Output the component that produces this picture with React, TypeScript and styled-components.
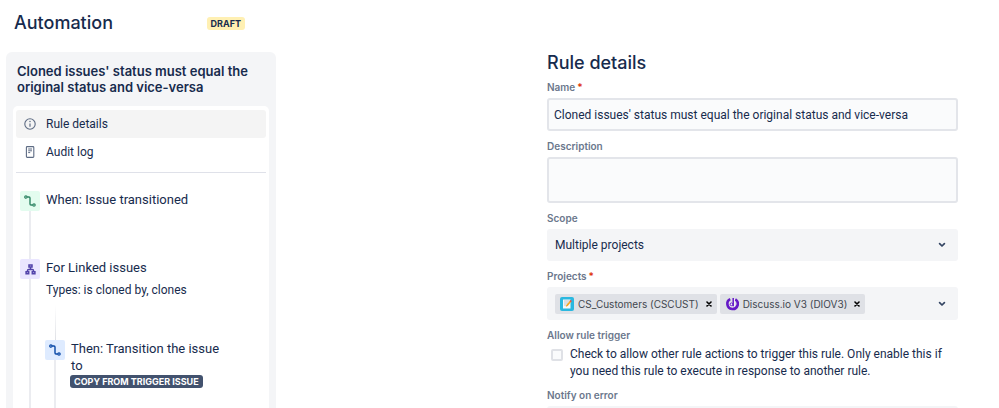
import React from "react";
import styled, { createGlobalStyle } from "styled-components";

const GlobalStyle = createGlobalStyle`
  *, *::before, *::after { box-sizing: border-box; }
  body {
    margin: 0;
    background: #ffffff;
    color: #172b4d;
    font-family: Roboto, "Liberation Sans", sans-serif;
    font-size: 12px;
    line-height: 16px;
  }
  button, input, textarea, select { font: inherit; color: inherit; }
`;

const displayFont = `Inter, "Liberation Sans", sans-serif`;

const Page = styled.div`
  display: flex;
  height: 100vh;
  overflow: hidden;
`;

const SideColumn = styled.div`
  display: flex;
  flex-direction: column;
  flex: 0 0 270px;
  margin-left: 6px;
`;

const TopBar = styled.header`
  display: flex;
  align-items: center;
  justify-content: space-between;
  flex: none;
  height: 52px;
  padding: 0 31px 6px 8px;
`;

const Heading = styled.h1`
  margin: 0;
  font-family: ${displayFont};
  font-size: 18px;
  line-height: 24px;
  font-weight: 500;
`;

const SectionHeading = styled(Heading).attrs({ as: "h2" })``;

const Lozenge = styled.span<{ $tone: "draft" | "bold" }>`
  display: inline-block;
  padding: 0 4px;
  border-radius: 3px;
  font-family: ${displayFont};
  font-size: 9px;
  line-height: 13px;
  font-weight: 700;
  text-transform: uppercase;
  white-space: nowrap;
  background: ${(p) => (p.$tone === "draft" ? "#fff0b3" : "#42526e")};
  color: ${(p) => (p.$tone === "draft" ? "#172b4d" : "#ffffff")};
`;

const Sidebar = styled.aside`
  display: flex;
  flex-direction: column;
  flex: 1;
  padding: 11px 7px 0;
  border-radius: 6px 6px 0 0;
  background: #f4f5f7;
`;

const RuleName = styled.h2`
  margin: 0 0 11px;
  padding: 0 4px;
  font-family: ${displayFont};
  font-size: 13px;
  line-height: 16px;
  font-weight: 600;
`;

const Panel = styled.div`
  flex: 1;
  padding: 4px 3px 0;
  border-radius: 5px 5px 0 0;
  background: #ffffff;
`;

const NavLink = styled.a<{ $active?: boolean }>`
  display: flex;
  align-items: center;
  gap: 10px;
  height: 28px;
  padding: 0 8px;
  border-radius: 3px;
  color: #172b4d;
  text-decoration: none;
  background: ${(p) => (p.$active ? "#f4f4f4" : "transparent")};
`;

const Divider = styled.hr`
  height: 1px;
  margin: 6px 0 18px;
  border: 0;
  background: #dfe1e9;
`;

const Steps = styled.div`
  padding-left: 4px;
`;

const Step = styled.div<{ $height?: number }>`
  display: flex;
  gap: 5px;
  min-height: ${(p) => (p.$height ? `${p.$height}px` : "0")};
`;

const Rail = styled.div`
  display: flex;
  flex-direction: column;
  align-items: center;
  flex: 0 0 20px;
`;

const RailLine = styled.div<{ $fade?: boolean }>`
  width: ${(p) => (p.$fade ? "1px" : "2px")};
  flex: ${(p) => (p.$fade ? "0 0 35px" : "1")};
  background: ${(p) => (p.$fade ? "linear-gradient(#ffffff, #dfe1e6)" : "#ebecf0")};
`;

const StepIcon = styled.span<{ $color: string; $background: string }>`
  display: grid;
  place-items: center;
  width: 20px;
  height: 20px;
  border-radius: 2px;
  color: ${(p) => p.$color};
  background: ${(p) => p.$background};
`;

const StepBody = styled.div`
  flex: 1;
`;

const StepTitle = styled.h3`
  margin: 0;
  padding-left: 1px;
  font-size: 13px;
  line-height: 17px;
  font-weight: 400;
`;

const StepNote = styled.p`
  margin: 6px 0 7px;
  padding-left: 1px;
`;

const BranchText = styled.div`
  display: flex;
  flex-direction: column;
  align-items: flex-start;
  gap: 1px;
  max-width: 160px;
  padding: 35px 0 60px;
`;

const Main = styled.main`
  display: flex;
  flex: 1;
  justify-content: flex-end;
  padding: 51px 41px 0 24px;
`;

const Form = styled.form`
  display: flex;
  flex-direction: column;
  gap: 9px;
  width: 60%;
  min-width: 411px;
`;

const TitleBlock = styled.div`
  margin-bottom: -3px;
`;

const Field = styled.div`
  display: flex;
  flex-direction: column;
  gap: 4px;
`;

const Label = styled.label`
  font-family: ${displayFont};
  font-size: 10px;
  line-height: 13px;
  font-weight: 600;
  color: #6b778c;
`;

const Required = styled.span`
  margin-left: 2px;
  color: #de350b;
`;

const TextInput = styled.input`
  width: 100%;
  height: 33px;
  padding: 0 5px;
  border: 2px solid #e3e5ea;
  border-radius: 3px;
  background: #fafbfc;
`;

const TextArea = styled.textarea`
  display: block;
  width: 100%;
  height: 46px;
  padding: 5px;
  border: 2px solid #e3e5ea;
  border-radius: 3px;
  background: #fafbfc;
  resize: none;
`;

const Picker = styled.div`
  display: grid;
  align-items: center;
  height: 32px;
  border-radius: 3px;
  background: #f4f5f7;
  & > * { grid-area: 1 / 1; }
`;

const Select = styled.select`
  appearance: none;
  width: 100%;
  height: 32px;
  padding: 0 32px 0 8px;
  border: 0;
  background: transparent;
`;

const PickerArrow = styled.span`
  display: grid;
  place-items: center;
  justify-self: end;
  width: 12px;
  margin-right: 10px;
  color: #344563;
  pointer-events: none;
`;

const MultiPicker = styled.div`
  display: flex;
  align-items: center;
  gap: 3px;
  min-height: 33px;
  padding: 0 10px 0 8px;
  border-radius: 3px;
  background: #f4f5f7;
`;

const Tag = styled.span`
  display: flex;
  align-items: center;
  height: 20px;
  padding: 0 2px 0 5px;
  gap: 4px;
  border-radius: 2px;
  background: #dfe1e6;
  color: #42474f;
  font-family: ${displayFont};
  font-size: 10px;
  white-space: nowrap;
`;

const IconButton = styled.button`
  display: grid;
  place-items: center;
  width: 12px;
  height: 16px;
  padding: 0;
  border: 0;
  background: none;
  color: #000000;
`;

const OpenButton = styled(IconButton)`
  margin-left: auto;
  color: #344563;
`;

const CheckRow = styled.label`
  display: flex;
  gap: 7px;
  padding-left: 4px;
  line-height: 17px;
`;

const Checkbox = styled.input`
  appearance: none;
  flex: none;
  width: 12px;
  height: 12px;
  margin: 3px 0 0;
  border: 2px solid #dfe1e6;
  border-radius: 2px;
  background: #fafbfc;
`;

const InfoIcon = () => (
  <svg width="12" height="12" viewBox="0 0 12 12" fill="none" stroke="#5e6c84">
    <circle cx="6" cy="6" r="5.2" strokeWidth="1.1" />
    <path d="M6 5.4v3.4" strokeWidth="1.2" />
    <circle cx="6" cy="3.5" r=".75" fill="#5e6c84" stroke="none" />
  </svg>
);

const LogIcon = () => (
  <svg width="12" height="12" viewBox="0 0 12 12" fill="none" stroke="#5e6c84">
    <rect x="2.4" y=".6" width="7.4" height="10.8" rx=".8" strokeWidth="1.1" />
    <path d="M4.2 3h3.8M4.2 4.8h3.8M4.2 6.6h2" strokeWidth="1" />
  </svg>
);

const TransitionIcon = () => (
  <svg width="12" height="12" viewBox="0 0 12 12" fill="none" stroke="currentColor">
    <circle cx="1.9" cy="2" r="1.2" strokeWidth="1.2" />
    <circle cx="10" cy="10" r="1.2" strokeWidth="1.2" />
    <path d="M3.1 2H5q1 0 1 1v6q0 1 1 1h1.8" strokeWidth="1.4" />
  </svg>
);

const BranchIcon = () => (
  <svg width="11" height="11" viewBox="0 0 11 11" fill="none" stroke="currentColor" strokeWidth="1.5">
    <path d="M4 1.1h3v2H4zM1.1 7.7h2.6v2H1.1zM7.3 7.7h2.6v2H7.3zM5.5 3.3v2.2M2.4 7.7V7q0-1.4 1.4-1.4h3.4q1.4 0 1.4 1.4v.7" />
  </svg>
);

const ChevronIcon = () => (
  <svg width="8" height="6" viewBox="0 0 8 6" fill="none" stroke="currentColor" strokeWidth="1.7" strokeLinecap="round" strokeLinejoin="round">
    <path d="M1.6 1.6 4 4l2.4-2.4" />
  </svg>
);

const CloseIcon = () => (
  <svg width="6" height="6" viewBox="0 0 6 6" stroke="currentColor" strokeWidth="1.6" strokeLinecap="round">
    <path d="m1 1 4 4M5 1 1 5" />
  </svg>
);

const NotesLogo = () => (
  <svg width="14" height="14" viewBox="0 0 14 14">
    <rect width="14" height="14" rx="2" fill="#2bb8e0" />
    <rect x="3" y="2.5" width="7.5" height="9" fill="#f7f8fa" />
    <path d="M4 4h5.4M4 6h4M4 8h2.6" stroke="#aeb8c5" strokeWidth=".8" />
    <path d="m5.8 9.8.5-1.8 3.8-4.6 1.4 1.2-3.8 4.5z" fill="#f5a623" />
    <path d="m9.5 4.1.9-1.1 1.4 1.1-.9 1.2z" fill="#e5484d" />
  </svg>
);

const DiscussLogo = () => (
  <svg width="14" height="14" viewBox="0 0 14 14" fill="none">
    <path d="M10.3 2.4A5.2 5.2 0 0 1 7 12" stroke="#6519c7" strokeWidth="2.6" />
    <path d="M5.2 2.2A5.2 5.2 0 0 0 7 12" stroke="#6519c7" strokeWidth="2.6" />
    <circle cx="6.5" cy="7.3" r="2.4" fill="#f4f5f7" />
    <circle cx="6.5" cy="7.3" r="1.4" stroke="#6519c7" strokeWidth="1" />
    <path d="M8.2 1v8.3" stroke="#6519c7" strokeWidth="1.5" />
    <path d="M9.5 2v7.3" stroke="#f4f5f7" strokeWidth=".8" />
  </svg>
);

const projects = [
  { name: "CS_Customers (CSCUST)", Logo: NotesLogo },
  { name: "Discuss.io V3 (DIOV3)", Logo: DiscussLogo },
];

const ruleName = "Cloned issues' status must equal the original status and vice-versa";

export default function App() {
  return (
    <Page>
      <GlobalStyle />
      <SideColumn>
        <TopBar>
          <Heading>Automation</Heading>
          <Lozenge $tone="draft">Draft</Lozenge>
        </TopBar>
        <Sidebar>
          <RuleName>{ruleName}</RuleName>
          <Panel>
            <nav>
              <NavLink href="#details" $active>
                <InfoIcon />
                Rule details
              </NavLink>
              <NavLink href="#audit">
                <LogIcon />
                Audit log
              </NavLink>
            </nav>
            <Divider />
            <Steps>
              <Step $height={68}>
                <Rail>
                  <StepIcon $color="#2f8565" $background="#e3fcef">
                    <TransitionIcon />
                  </StepIcon>
                  <RailLine />
                </Rail>
                <StepBody>
                  <StepTitle>When: Issue transitioned</StepTitle>
                </StepBody>
              </Step>
              <Step>
                <Rail>
                  <StepIcon $color="#5243aa" $background="#eae6ff">
                    <BranchIcon />
                  </StepIcon>
                  <RailLine />
                </Rail>
                <StepBody>
                  <StepTitle>For Linked issues</StepTitle>
                  <StepNote>Types: is cloned by, clones</StepNote>
                  <Step>
                    <Rail>
                      <RailLine $fade />
                      <StepIcon $color="#0747a6" $background="#deebff">
                        <TransitionIcon />
                      </StepIcon>
                      <RailLine />
                    </Rail>
                    <BranchText>
                      <StepTitle>Then: Transition the issue to</StepTitle>
                      <Lozenge $tone="bold">Copy from trigger issue</Lozenge>
                    </BranchText>
                  </Step>
                </StepBody>
              </Step>
            </Steps>
          </Panel>
        </Sidebar>
      </SideColumn>
      <Main>
        <Form>
          <TitleBlock>
            <SectionHeading>Rule details</SectionHeading>
          </TitleBlock>
          <Field>
            <Label htmlFor="name">
              Name<Required>*</Required>
            </Label>
            <TextInput id="name" defaultValue={ruleName} required />
          </Field>
          <Field>
            <Label htmlFor="description">Description</Label>
            <TextArea id="description" />
          </Field>
          <Field>
            <Label htmlFor="scope">Scope</Label>
            <Picker>
              <Select id="scope" defaultValue="multiple">
                <option value="multiple">Multiple projects</option>
              </Select>
              <PickerArrow>
                <ChevronIcon />
              </PickerArrow>
            </Picker>
          </Field>
          <Field>
            <Label htmlFor="projects">
              Projects<Required>*</Required>
            </Label>
            <MultiPicker>
              {projects.map(({ name, Logo }) => (
                <Tag key={name}>
                  <Logo />
                  {name}
                  <IconButton type="button" aria-label={`Remove ${name}`}>
                    <CloseIcon />
                  </IconButton>
                </Tag>
              ))}
              <OpenButton id="projects" type="button" aria-label="Choose projects">
                <ChevronIcon />
              </OpenButton>
            </MultiPicker>
          </Field>
          <Field>
            <Label as="span">Allow rule trigger</Label>
            <CheckRow>
              <Checkbox type="checkbox" />
              <span>
                Check to allow other rule actions to trigger this rule. Only enable this if you need
                this rule to execute in response to another rule.
              </span>
            </CheckRow>
          </Field>
          <Field>
            <Label htmlFor="notify">Notify on error</Label>
            <Picker>
              <Select id="notify" defaultValue="">
                <option value=""></option>
              </Select>
            </Picker>
          </Field>
        </Form>
      </Main>
    </Page>
  );
}
